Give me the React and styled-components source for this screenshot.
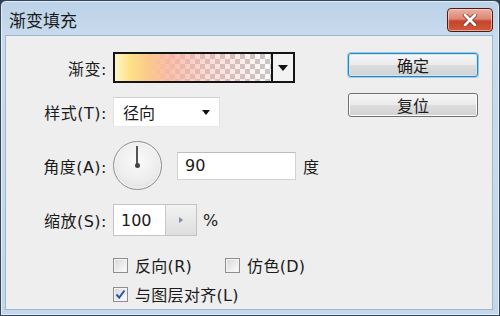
import React from 'react';
import styled, { createGlobalStyle } from 'styled-components';

const GlobalStyle = createGlobalStyle`
  html, body {
    margin: 0;
    padding: 0;
    background: #2f3e4e;
  }
  * {
    box-sizing: border-box;
  }
`;

const FONT = `"DejaVu Sans", "Noto Sans CJK SC", sans-serif`;

const Window = styled.div`
  width: 500px;
  height: 316px;
  display: flex;
  flex-direction: column;
  padding: 0 6px 5px 4px;
  border: 1px solid #34475a;
  border-radius: 6px 6px 0 0;
  background: linear-gradient(to bottom, #bcd2e8 0%, #c9dbee 12%, #c3d8ec 100%);
  box-shadow: inset 0 0 0 1px rgba(255, 255, 255, 0.55);
  font-family: ${FONT};
  color: #1b1b1b;
`;

const TitleBar = styled.div`
  height: 34px;
  flex: none;
  display: flex;
  justify-content: space-between;
  align-items: flex-start;
`;

const Title = styled.div`
  margin: 9px 0 0 4px;
  font-size: 17px;
  line-height: 22px;
  color: #1a1a1a;
`;

const CloseButton = styled.div`
  width: 46px;
  height: 24px;
  margin: 7px 0 0 0;
  display: flex;
  align-items: center;
  justify-content: center;
  border: 1px solid #4b1b14;
  border-radius: 4px;
  background: linear-gradient(to bottom, #eab1a4 0%, #dd8673 45%, #c5442c 55%, #cf5a3e 100%);
  box-shadow: inset 0 0 0 1px rgba(255, 220, 210, 0.6);
`;

const Body = styled.div`
  flex: 1;
  display: flex;
  justify-content: space-between;
  padding: 16px 14px 0 0;
  background: #eeeeee;
  border: 1px solid #9fb6cc;
`;

const Form = styled.div`
  display: grid;
  grid-template-columns: 101px auto;
  grid-template-rows: 31px 30px 49px 32px auto;
  column-gap: 6px;
  row-gap: 14px;
  align-items: center;
`;

const Label = styled.div`
  justify-self: end;
  font-size: 16px;
  letter-spacing: 0.5px;
  white-space: nowrap;
`;

const Swatch = styled.div`
  width: 182px;
  height: 31px;
  display: flex;
  border: 2px solid #141414;
`;

const GradientFill = styled.div`
  flex: 1;
  background:
    linear-gradient(to right,
      rgba(255, 246, 205, 1) 0%,
      rgba(253, 226, 135, 1) 9%,
      rgba(251, 200, 140, 1) 22%,
      rgba(249, 180, 160, 0.85) 35%,
      rgba(248, 176, 165, 0.45) 60%,
      rgba(248, 176, 165, 0.05) 100%),
    repeating-conic-gradient(#c6c6c6 0% 25%, #ffffff 0% 50%) 0 0 / 10px 10px;
`;

const SwatchArrow = styled.div`
  width: 22px;
  display: flex;
  align-items: center;
  justify-content: center;
  border-left: 2px solid #141414;
  background: #f3f3f3;
`;

const Triangle = styled.span`
  width: 0;
  height: 0;
  border-left: ${(p) => p.$w / 2}px solid transparent;
  border-right: ${(p) => p.$w / 2}px solid transparent;
  border-top: ${(p) => p.$h}px solid #111;
`;

const Select = styled.div`
  width: 107px;
  height: 30px;
  display: flex;
  align-items: center;
  justify-content: space-between;
  padding: 0 9px 0 9px;
  background: #ffffff;
  border-top: 1px solid #cfcfcf;
  border-left: 1px solid #e2e2e2;
  border-right: 1px solid #e2e2e2;
  border-bottom: 1px solid #e9e9e9;
  font-size: 16px;
`;

const Inline = styled.div`
  display: flex;
  align-items: center;
  gap: ${(p) => p.$gap}px;
`;

const Dial = styled.div`
  position: relative;
  width: 49px;
  height: 49px;
  border-radius: 50%;
  border: 1px solid #8c8c8c;
  background: radial-gradient(circle at 50% 40%, #fbfbfb 0%, #ededed 55%, #d9d9d9 100%);
  box-shadow: inset 0 0 0 1px #f8f8f8;
`;

const DialHand = styled.div`
  position: absolute;
  left: 22px;
  top: 4px;
  width: 2px;
  height: 20px;
  background: #555;
`;

const DialDot = styled.div`
  position: absolute;
  left: 21px;
  top: 21px;
  width: 5px;
  height: 5px;
  border-radius: 50%;
  background: #444;
`;

const TextBox = styled.div`
  width: ${(p) => p.$w}px;
  height: ${(p) => p.$h}px;
  display: flex;
  align-items: center;
  padding-left: 7px;
  background: #ffffff;
  border: 1px solid #d2d2d2;
  border-top-color: #bdbdbd;
  font-size: 16px;
`;

const Spinner = styled.div`
  width: 84px;
  height: 32px;
  display: flex;
  border: 1px solid #c4c4c4;
  background: #ffffff;
`;

const SpinnerText = styled.div`
  width: 52px;
  display: flex;
  align-items: center;
  padding-left: 7px;
  font-size: 16px;
  border-right: 1px solid #c8c8c8;
`;

const SpinnerArrow = styled.div`
  flex: 1;
  display: flex;
  align-items: center;
  justify-content: center;
  background: linear-gradient(to bottom, #f2f2f2, #dedede);

  span {
    width: 0;
    height: 0;
    border-top: 3px solid transparent;
    border-bottom: 3px solid transparent;
    border-left: 4px solid #7d8ea6;
  }
`;

const Unit = styled.span`
  font-size: 16px;
`;

const Checks = styled.div`
  grid-column: 2;
  display: flex;
  flex-direction: column;
  gap: 9px;
`;

const CheckRow = styled.div`
  display: flex;
  align-items: center;
  gap: 33px;
  height: 20px;
`;

const CheckItem = styled.label`
  display: flex;
  align-items: center;
  gap: 7px;
  font-size: 16px;
  letter-spacing: 0.3px;
`;

const Box = styled.span`
  width: 15px;
  height: 15px;
  display: flex;
  align-items: center;
  justify-content: center;
  border: 1px solid #8e8e8e;
  background: linear-gradient(135deg, #d6d6d6 0%, #f3f3f3 70%, #fdfdfd 100%);
  box-shadow: inset 0 0 0 1px #f4f4f4;
`;

const Check = ({ checked, children }) => (
  <CheckItem>
    <Box>
      {checked && (
        <svg width="11" height="11" viewBox="0 0 11 11">
          <path d="M1.5 5.5 L4.2 8.6 L9.5 1.5" fill="none" stroke="#2f56a8" strokeWidth="2" />
        </svg>
      )}
    </Box>
    {children}
  </CheckItem>
);

const Buttons = styled.div`
  display: flex;
  flex-direction: column;
  gap: 16px;
  padding-top: 1px;
`;

const Button = styled.div`
  width: 130px;
  height: 24px;
  display: flex;
  align-items: center;
  justify-content: center;
  font-size: 16px;
  border: 1px solid ${(p) => (p.$focused ? '#3a7fb4' : '#707070')};
  border-radius: 3px;
  background: linear-gradient(to bottom, #f6f6f6 0%, #ebebeb 48%, #dddddd 52%, #d2d2d2 100%);
  box-shadow: ${(p) =>
    p.$focused ? '0 0 0 1px #8fd0ee, inset 0 0 0 1px #c6ecfb' : 'inset 0 0 0 1px #fbfbfb'};
`;

export default function App() {
  return (
    <>
      <GlobalStyle />
      <Window>
        <TitleBar>
          <Title>渐变填充</Title>
          <CloseButton>
            <svg width="16" height="12" viewBox="0 0 16 12">
              <path
                d="M3 1 L13 11 M13 1 L3 11"
                stroke="#7a2a1c"
                strokeWidth="4.2"
                strokeLinecap="round"
              />
              <path
                d="M3 1 L13 11 M13 1 L3 11"
                stroke="#ffffff"
                strokeWidth="2.8"
                strokeLinecap="round"
              />
            </svg>
          </CloseButton>
        </TitleBar>
        <Body>
          <Form>
            <Label>渐变:</Label>
            <Swatch>
              <GradientFill />
              <SwatchArrow>
                <Triangle $w={11} $h={6} />
              </SwatchArrow>
            </Swatch>

            <Label>样式(T):</Label>
            <Select>
              <span>径向</span>
              <Triangle $w={9} $h={5} />
            </Select>

            <Label>角度(A):</Label>
            <Inline $gap={15}>
              <Dial>
                <DialHand />
                <DialDot />
              </Dial>
              <Inline $gap={7}>
                <TextBox $w={119} $h={28}>90</TextBox>
                <Unit>度</Unit>
              </Inline>
            </Inline>

            <Label>缩放(S):</Label>
            <Inline $gap={6}>
              <Spinner>
                <SpinnerText>100</SpinnerText>
                <SpinnerArrow>
                  <span />
                </SpinnerArrow>
              </Spinner>
              <Unit>%</Unit>
            </Inline>

            <Checks>
              <CheckRow>
                <Check>反向(R)</Check>
                <Check>仿色(D)</Check>
              </CheckRow>
              <CheckRow>
                <Check checked>与图层对齐(L)</Check>
              </CheckRow>
            </Checks>
          </Form>
          <Buttons>
            <Button $focused>确定</Button>
            <Button>复位</Button>
          </Buttons>
        </Body>
      </Window>
    </>
  );
}
